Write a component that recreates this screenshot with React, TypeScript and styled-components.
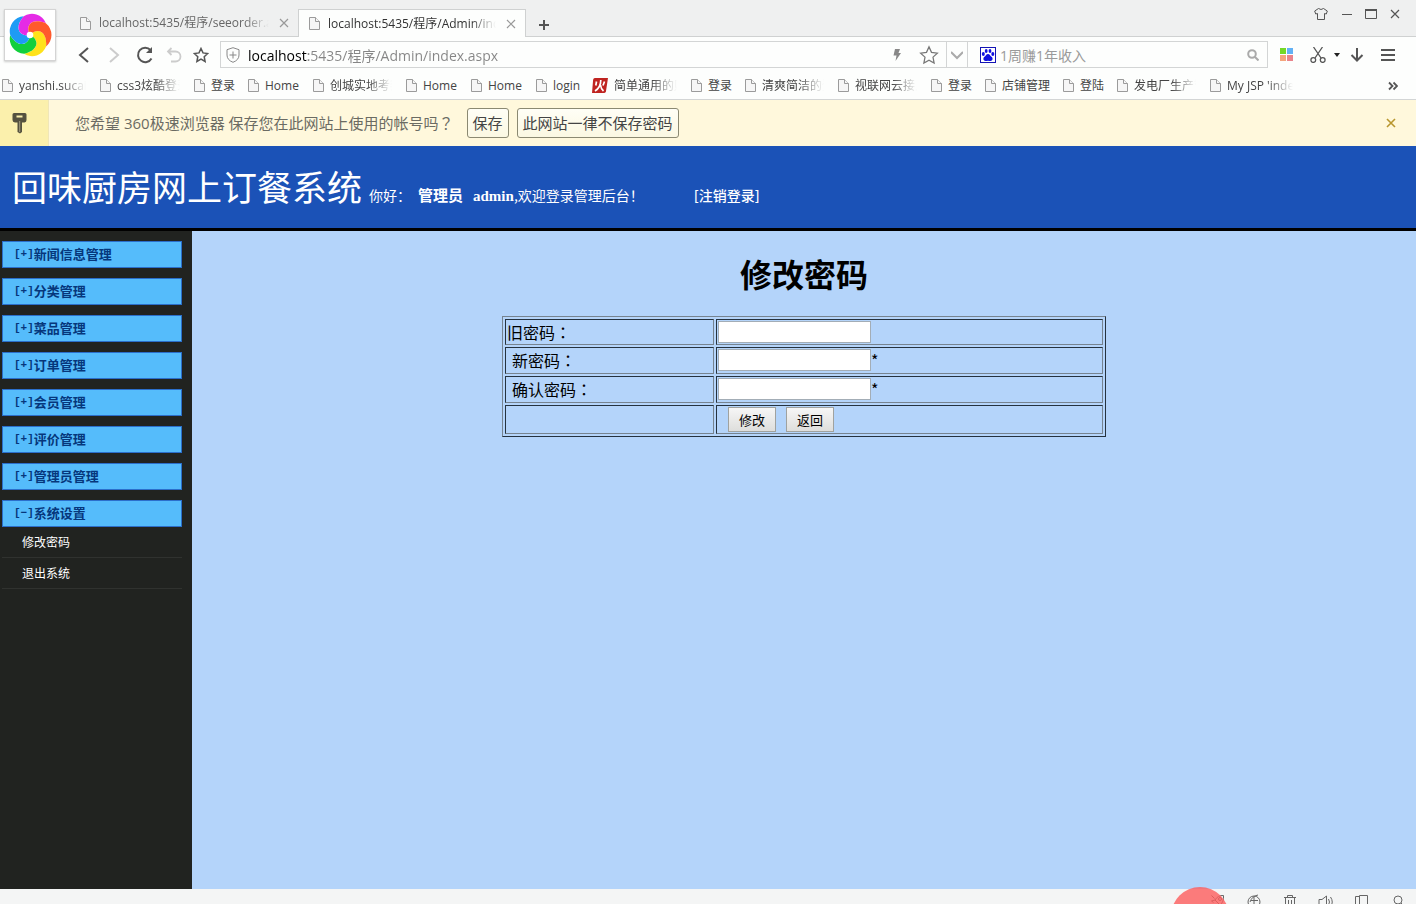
import React from 'react';
import styled, { createGlobalStyle, css } from 'styled-components';

const GlobalStyle = createGlobalStyle`
  *, *::before, *::after { box-sizing: border-box; }
  html, body { margin: 0; padding: 0; }
  body {
    font-family: "Open Sans", "Noto Sans CJK SC", sans-serif;
    font-size: 12px;
    color: #444;
  }
  button, input { font-family: inherit; margin: 0; }
`;

const Page = styled.div`
  display: flex;
  flex-direction: column;
  min-height: 100vh;
  overflow-x: hidden;
  position: relative;
`;

/* Full-width punctuation centred in its square. */
const CenteredMark = styled.span`
  font-family: "Noto Sans CJK TC", sans-serif;
`;

/* ---------- browser frame ---------- */

const IconButton = styled.button<{ $w?: number; $color?: string }>`
  display: flex;
  align-items: center;
  justify-content: center;
  flex: none;
  width: ${p => p.$w ?? 24}px;
  height: 24px;
  padding: 0;
  border: 0;
  background: none;
  color: ${p => p.$color ?? '#555'};
`;

const LogoTile = styled.div`
  position: absolute;
  left: 4px;
  top: 9px;
  z-index: 2;
  display: flex;
  align-items: center;
  justify-content: center;
  width: 52px;
  height: 52px;
  background: #fff;
  border: 1px solid #d4d4d4;
  box-shadow: 0 1px 2px rgba(0, 0, 0, 0.2);
`;

const TabStrip = styled.div`
  display: flex;
  align-items: flex-end;
  height: 37px;
  padding-left: 70px;
  background: #eff0f0;
  box-shadow: inset 0 -1px 0 #cfd1d1;
`;

const Tab = styled.div<{ $active?: boolean }>`
  display: flex;
  align-items: center;
  width: 228px;
  height: 28px;
  padding: 0 6px 0 10px;
  color: #666;
  ${p =>
    p.$active &&
    css`
      background: #fdfefd;
      border: 1px solid #cfd1d1;
      border-bottom: 0;
      color: #333;
    `}
`;

const fade = css`
  overflow: hidden;
  white-space: nowrap;
  mask-image: linear-gradient(to right, #000 calc(100% - 28px), transparent calc(100% - 3px));
`;

const TabTitle = styled.span`
  flex: 1;
  min-width: 0;
  margin: 0 3px 0 8px;
  font-size: 12px;
  line-height: 20px;
  ${fade}
`;

const WindowControls = styled.div`
  display: flex;
  align-self: flex-start;
  margin: 2px 9px 0 auto;
`;

const Toolbar = styled.div`
  display: flex;
  align-items: center;
  height: 35px;
  padding: 0 15px 0 69px;
  background: #fdfefd;
`;

const NavButtons = styled.div`
  display: flex;
  margin-right: 5px;
`;

const Omnibox = styled.div`
  display: flex;
  align-items: center;
  flex: 1;
  min-width: 0;
  height: 27px;
  border: 1px solid #d3d5d5;
  background: #fdfefd;
`;

const AddressInput = styled.input`
  flex: 1;
  min-width: 0;
  height: 24px;
  margin-left: 4px;
  padding: 0;
  border: 0;
  outline: 0;
  font-size: 14px;
  color: transparent;
  background: linear-gradient(to right, #000 60px, #858585 60px);
  background-clip: text;
`;

const DropButton = styled(IconButton)`
  width: 22px;
  height: 25px;
  border: solid #d3d5d5;
  border-width: 0 1px;
`;

const SearchBox = styled.div`
  display: flex;
  align-items: center;
  gap: 4px;
  width: 299px;
  padding: 0 2px 0 12px;
`;

const SearchInput = styled.input`
  flex: 1;
  min-width: 0;
  height: 24px;
  padding: 0;
  border: 0;
  outline: 0;
  background: transparent;
  font-size: 14px;
  color: #9a9a9a;
`;

const ToolButtons = styled.div`
  display: flex;
  align-items: center;
  margin-left: 3px;
`;

const BookmarkBar = styled.nav`
  display: flex;
  align-items: center;
  height: 28px;
  padding-left: 2px;
  background: #fdfefd;
  border-bottom: 1px solid #d3d5d5;
`;

const Bookmark = styled.a`
  display: flex;
  align-items: center;
  gap: 6px;
  flex: none;
  margin-right: 11px;
  color: #444;
  text-decoration: none;
`;

const BookmarkTitle = styled.span<{ $w: number; $fade?: boolean }>`
  width: ${p => p.$w}px;
  line-height: 18px;
  white-space: nowrap;
  ${p => p.$fade && fade}
`;

const MoreButton = styled(IconButton)`
  margin: 0 11px 0 auto;
`;

/* ---------- save password bar ---------- */

const InfoBar = styled.div`
  display: flex;
  align-items: center;
  height: 46px;
  background: #fff8dc;
  font-size: 15px;
  color: #6b6b63;
`;

const KeyCell = styled.div`
  align-self: stretch;
  width: 49px;
  padding: 13px 0 0 12px;
  background: #fbf0ac;
  border-right: 1px solid #efe6b8;
`;

const InfoText = styled.span`
  margin: 0 13px 0 26px;
  line-height: 22px;
`;

const InfoButton = styled.button`
  height: 30px;
  margin-right: 8px;
  padding: 0 5px;
  border: 1px solid #8b8972;
  border-radius: 3px;
  background: linear-gradient(#fffef6, #fbf8e2);
  font-size: 15px;
  line-height: 22px;
  color: #444;
`;

const InfoClose = styled(IconButton)`
  margin: 0 13px 0 auto;
`;

/* ---------- admin site ---------- */

const SiteHeader = styled.header`
  display: flex;
  align-items: baseline;
  height: 85px;
  padding: 14px 12px 0;
  background: #1b52b7;
  border-bottom: 3px solid #000;
  color: #fff;
  font-family: "Noto Sans CJK SC", sans-serif;
  font-size: 14px;
`;

const SiteTitle = styled.span`
  margin-right: 7px;
  font-size: 35px;
  line-height: 52px;
`;

const Greeting = styled.span`
  display: flex;
  align-items: baseline;
`;

const RoleName = styled.b`
  margin: 0 10px 0 7px;
  font-size: 15px;
  font-weight: 700;
`;

const UserName = styled.b`
  font-family: "Liberation Serif", serif;
  font-size: 15px;
  font-weight: 700;
`;

const LogoutLink = styled.a`
  margin-left: 50px;
  color: #fff;
  font-weight: 500;
  text-decoration: none;
`;

const SiteBody = styled.div`
  display: flex;
  flex: 1;
`;

const Sidebar = styled.nav`
  flex: none;
  width: 192px;
  padding: 10px 10px 0 2px;
  background: #212320;
  font-family: "Noto Sans CJK SC", sans-serif;
`;

const MenuGroup = styled.button`
  display: flex;
  align-items: center;
  width: 100%;
  height: 27px;
  margin-top: 10px;
  padding: 0 11px 2px;
  border: 1px solid #2b6fcb;
  background: #55bcfb;
  color: #06377c;
  font-size: 13px;
  font-weight: 700;
  line-height: 18px;

  &:first-child {
    margin-top: 0;
  }
`;

const Sign = styled.span`
  font-family: "Liberation Mono", monospace;
  font-size: 11px;
`;

const MenuItem = styled.a`
  display: block;
  height: 31px;
  padding-left: 20px;
  border-bottom: 1px solid #30322f;
  color: #fff;
  font-size: 12px;
  line-height: 30px;
  text-decoration: none;
`;

const Content = styled.main`
  display: flex;
  flex-direction: column;
  align-items: center;
  flex: 1;
  padding-top: 18px;
  background: #b4d4fa;
  color: #000;
  font-family: "Noto Sans CJK SC", sans-serif;
`;

const Heading = styled.h1`
  margin: 0 0 19px;
  font-size: 32px;
  line-height: 48px;
`;

const FormTable = styled.table`
  width: 604px;
  border: 1px solid;
  border-color: #76838f #25323e #25323e #76838f;
  border-spacing: 2px;
  font-size: 16px;
`;

const Cell = styled.td<{ $w?: number }>`
  width: ${p => (p.$w ? `${p.$w}px` : 'auto')};
  height: 27px;
  padding: 1px;
  border: 1px solid;
  border-color: #25323e #76838f #76838f #25323e;
  vertical-align: top;

  tr:first-child > & {
    height: 26px;
  }
`;

const FieldLabel = styled.label<{ $indent?: boolean }>`
  display: block;
  padding-left: ${p => (p.$indent ? 5 : 0)}px;
  line-height: 22px;
`;

const Field = styled.div`
  display: flex;
  line-height: 22px;
`;

const PasswordInput = styled.input`
  width: 153px;
  height: 22px;
  padding: 1px 2px;
  border: 1px solid #a3adb6;
  background: #fff;
  font-size: 13px;
`;

const FormActions = styled.div`
  display: flex;
  gap: 10px;
  padding-left: 10px;
`;

const FormButton = styled.button`
  width: 48px;
  height: 25px;
  padding: 0;
  border: 1px solid #a0a29f;
  background: linear-gradient(#f6f6f6, #dededc);
  color: #000;
  font-size: 13px;
  line-height: 20px;
`;

/* ---------- status bar ---------- */

const StatusBar = styled.footer`
  position: relative;
  display: flex;
  justify-content: flex-end;
  gap: 20px;
  height: 15px;
  padding: 5px 10px 0;
  background: #f4f5f5;
`;

const StatusButton = styled.button`
  width: 16px;
  height: 10px;
  padding: 0;
  border: 0;
  overflow: hidden;
  background: none;
  color: #666;
`;

const Bubble = styled.svg`
  position: absolute;
  right: 187px;
  bottom: 0;
`;

/* ---------- drawings ---------- */

type StrokeProps = { size?: number; w?: number; children: React.ReactNode };

const Drawing = styled.svg`
  display: block;
  flex: none;
`;

const Stroke = ({ size = 16, w = 1, children }: StrokeProps) => (
  <Drawing
    width={size}
    height={size}
    viewBox={`0 0 ${size} ${size}`}
    fill="none"
    stroke="currentColor"
    strokeWidth={w}
  >
    {children}
  </Drawing>
);

const FileIcon = () => (
  <Drawing width="11" height="13" viewBox="0 0 11 13" fill="#f6f6f6" stroke="#9b9b9b">
    <path d="M.5.5h6l4 4v8H.5z" />
    <path d="M6.500 .5v4h4" />
  </Drawing>
);

const FireIcon = () => (
  <Drawing width="16" height="15" viewBox="0 0 16 15">
    <path d="M3 0h13l-2 13q0 2-3 2H0L1 3q0-3 2-3z" fill="#bf2420" />
    <path d="M4.500 3.500l-.7 4M8.800 2q0 7.500-5.800 11M8.500 7q.5 4 3 6M12.500 3.500l-1.500 4" fill="none" stroke="#fff" strokeWidth="1.700" />
  </Drawing>
);

const petals = [
  ['#ffe21a', 0],
  ['#12cf3c', 72],
  ['#1e9bf5', 144],
  ['#e52be6', 216],
  ['#ff5a2c', 288],
] as const;

const BrowserLogo = () => (
  <svg width="44" height="44" viewBox="-22 -22 44 44">
    {petals.map(([color, angle]) => (
      <path
        key={color}
        d="M0 0C6-8 17-6 17 10A15 15 0 0 1-4.300 19.300C11 14.300 9.500 3.200 0 0z"
        fill={color}
        transform={`rotate(${angle + 5})`}
      />
    ))}
    <circle r="3.300" fill="#fff" />
  </svg>
);

const PawIcon = () => (
  <Drawing width="16" height="16" viewBox="0 0 16 16">
    <rect x=".5" y=".5" width="15" height="15" fill="#fff" stroke="#1414b4" />
    <g fill="#1010e0">
      <ellipse cx="3.300" cy="7" rx="1.500" ry="1.900" />
      <ellipse cx="6.200" cy="4" rx="1.400" ry="1.900" />
      <ellipse cx="10" cy="4" rx="1.400" ry="1.900" />
      <ellipse cx="12.800" cy="7" rx="1.500" ry="1.900" />
      <path d="M8 7c1.700 0 2.200 1.800 3.500 2.800 2 1.500 1 4.200-1 4.200-1 0-1.500-.3-2.500-.3s-1.500.3-2.500.3c-2 0-3-2.700-1-4.200C5.800 8.800 6.300 7 8 7z" />
    </g>
  </Drawing>
);

const CloseMark = ({ w = 1.2 }: { w?: number }) => (
  <Stroke size={10} w={w}>
    <path d="M1 1l8 8M9 1l-8 8" />
  </Stroke>
);

const KeyIcon = () => (
  <svg width="15" height="21" viewBox="0 0 15 21">
    <path d="M2 0h11q1.500 0 1.500 1.500V7q0 2-2 2.500H10V19l-2 1.500L5.500 19V9.500H3Q.5 9 .5 7V1.500Q.5 0 2 0z" fill="#55523f" />
    <path d="M4.500 2.500h6v2h-6z" fill="#fbf0ac" />
    <path d="M7.700 8v11" stroke="#a29d80" />
  </svg>
);

type Mark = { title: string; w: number; fade?: boolean; fire?: boolean };
const bookmarks: Mark[] = [
  { title: 'yanshi.sucai', w: 70, fade: true },
  { title: 'css3炫酷登录', w: 66, fade: true },
  { title: '登录', w: 26 },
  { title: 'Home', w: 37 },
  { title: '创城实地考察', w: 65, fade: true },
  { title: 'Home', w: 37 },
  { title: 'Home', w: 37 },
  { title: 'login', w: 28 },
  { title: '简单通用的账', w: 66, fade: true, fire: true },
  { title: '登录', w: 26 },
  { title: '清爽简洁的登', w: 65, fade: true },
  { title: '视联网云接入', w: 65, fade: true },
  { title: '登录', w: 26 },
  { title: '店铺管理', w: 50 },
  { title: '登陆', w: 26 },
  { title: '发电厂生产管', w: 65, fade: true },
  { title: "My JSP 'index'", w: 69, fade: true },
];

const groups = ['新闻信息管理', '分类管理', '菜品管理', '订单管理', '会员管理', '评价管理', '管理员管理'];

const STAR = 'M8 1.500l2 4.400 4.700.6-3.500 3.200.9 4.800L8 12.200l-4.100 2.300.9-4.800L1.300 6.500 6 5.900z';

export default function App() {
  return (
    <Page>
      <GlobalStyle />
      <LogoTile>
        <BrowserLogo />
      </LogoTile>

      <TabStrip>
        <Tab>
          <FileIcon />
          <TabTitle>localhost:5435/程序/seeorder.aspx</TabTitle>
          <IconButton $w={17} $color="#999" aria-label="关闭标签"><CloseMark /></IconButton>
        </Tab>
        <Tab $active>
          <FileIcon />
          <TabTitle>localhost:5435/程序/Admin/index.aspx</TabTitle>
          <IconButton $w={17} $color="#999" aria-label="关闭标签"><CloseMark /></IconButton>
        </Tab>
        <IconButton $w={36} aria-label="新标签">
          <Stroke size={10} w={2}><path d="M5 0v10M0 5h10" /></Stroke>
        </IconButton>
        <WindowControls>
          <IconButton $w={28} aria-label="皮肤">
            <Stroke size={14}><path d="M4.500 1.500Q7 3.500 9.500 1.500L13.300 4l-1 3-1.800-.5v6h-7v-6L1.700 7l-1-3z" /></Stroke>
          </IconButton>
          <IconButton aria-label="最小化">
            <Stroke size={10}><path d="M0 5.500h10" /></Stroke>
          </IconButton>
          <IconButton aria-label="最大化">
            <Stroke size={12}><path d="M.5 1.500h11v9H.5z" /><path d="M0 2h12" strokeWidth="2" /></Stroke>
          </IconButton>
          <IconButton aria-label="关闭"><CloseMark /></IconButton>
        </WindowControls>
      </TabStrip>

      <Toolbar>
        <NavButtons>
          <IconButton $w={30} aria-label="后退">
            <Stroke w={2}><path d="M12 1L4 8l8 7" /></Stroke>
          </IconButton>
          <IconButton $w={29} $color="#ccc" aria-label="前进">
            <Stroke w={2}><path d="M4 1l8 7-8 7" /></Stroke>
          </IconButton>
          <IconButton $w={33} aria-label="刷新">
            <Stroke size={18} w={2}><path d="M15.500 12.500A7.200 7.200 0 1 1 14.500 4" /><path d="M16 1v6h-6z" fill="currentColor" stroke="none" /></Stroke>
          </IconButton>
          <IconButton $w={26} $color="#ccc" aria-label="恢复">
            <Stroke w={1.800}><path d="M5.500 1L2 4.500 5.500 8M2 4.500h7.500a5 5 0 0 1 0 10H5" /></Stroke>
          </IconButton>
          <IconButton $w={28} aria-label="收藏">
            <Stroke w={1.500}><path d={STAR} /></Stroke>
          </IconButton>
        </NavButtons>

        <Omnibox>
          <IconButton $w={23} $color="#888" aria-label="网站信息">
            <Stroke><path d="M8 .7l6 2V8q0 5-6 7.300Q2 13 2 8V2.700zM8 4.500v7M4.500 8h7" /></Stroke>
          </IconButton>
          <AddressInput aria-label="地址" defaultValue="localhost:5435/程序/Admin/index.aspx" />
          <IconButton $w={31} $color="#888" aria-label="极速模式">
            <svg width="8" height="12" viewBox="0 0 8 12"><path d="M2 0h5L5.500 4H8L2.500 12l1-5.500H.5z" fill="currentColor" /></svg>
          </IconButton>
          <IconButton $w={34} $color="#777" aria-label="加入收藏">
            <svg width="20" height="20" viewBox="0 0 16 16" fill="none" stroke="currentColor" strokeWidth="1"><path d={STAR} /></svg>
          </IconButton>
          <DropButton $color="#aaa" aria-label="地址列表">
            <Stroke size={12} w={2}><path d="M0 3l6 6 6-6" /></Stroke>
          </DropButton>
          <SearchBox>
            <PawIcon />
            <SearchInput aria-label="搜索" defaultValue="1周赚1年收入" />
            <IconButton $color="#aaa" aria-label="搜索">
              <Stroke size={12} w={2}><circle cx="5" cy="5" r="3.800" /><path d="M8 8l3.500 3.500" /></Stroke>
            </IconButton>
          </SearchBox>
        </Omnibox>

        <ToolButtons>
          <IconButton $w={31} aria-label="应用">
            <svg width="13" height="13" viewBox="0 0 13 13">
              <path d="M0 0h6v6H0z" fill="#74d827" />
              <path d="M7 0h6v6H7z" fill="#62b1f5" />
              <path d="M0 7h6v6H0z" fill="#f5a57c" />
              <path d="M7 7h6v6H7z" fill="#e9838b" />
            </svg>
          </IconButton>
          <IconButton $w={32} aria-label="截图">
            <Stroke w={1.300}><path d="M3.500 0l7.500 11M12.500 0L5 11" /><circle cx="3.300" cy="13" r="2.400" /><circle cx="12.700" cy="13" r="2.400" /></Stroke>
          </IconButton>
          <IconButton $w={6} $color="#222" aria-label="截图选项">
            <svg width="6" height="4" viewBox="0 0 6 4"><path d="M0 0h6L3 4z" fill="currentColor" /></svg>
          </IconButton>
          <IconButton $w={34} aria-label="下载">
            <Stroke size={14} w={2}><path d="M7 0v12M1.500 7L7 12.500 12.500 7" /></Stroke>
          </IconButton>
          <IconButton $w={27} aria-label="菜单">
            <Stroke size={14} w={2}><path d="M0 2h14M0 7h14M0 12h14" /></Stroke>
          </IconButton>
        </ToolButtons>
      </Toolbar>

      <BookmarkBar>
        {bookmarks.map((b, i) => (
          <Bookmark key={i} href="#">
            {b.fire ? <FireIcon /> : <FileIcon />}
            <BookmarkTitle $w={b.w} $fade={b.fade}>{b.title}</BookmarkTitle>
          </Bookmark>
        ))}
        <MoreButton aria-label="更多书签">
          <Stroke size={10} w={1.800}><path d="M1 1.500L4.500 5 1 8.500M5.500 1.500L9 5 5.500 8.500" /></Stroke>
        </MoreButton>
      </BookmarkBar>

      <InfoBar>
        <KeyCell><KeyIcon /></KeyCell>
        <InfoText>您希望 360极速浏览器 保存您在此网站上使用的帐号吗<CenteredMark>？</CenteredMark></InfoText>
        <InfoButton>保存</InfoButton>
        <InfoButton>此网站一律不保存密码</InfoButton>
        <InfoClose $color="#b8962e" aria-label="关闭提示"><CloseMark w={1.600} /></InfoClose>
      </InfoBar>

      <SiteHeader>
        <SiteTitle>回味厨房网上订餐系统</SiteTitle>
        <Greeting>
          你好：<RoleName>管理员</RoleName>
          <UserName>admin</UserName>,欢迎登录管理后台！
        </Greeting>
        <LogoutLink href="#">[注销登录]</LogoutLink>
      </SiteHeader>

      <SiteBody>
        <Sidebar>
          {groups.map(name => (
            <MenuGroup key={name}><Sign>[+]</Sign>{name}</MenuGroup>
          ))}
          <MenuGroup><Sign>[−]</Sign>系统设置</MenuGroup>
          <MenuItem href="#">修改密码</MenuItem>
          <MenuItem href="#">退出系统</MenuItem>
        </Sidebar>

        <Content>
          <Heading>修改密码</Heading>
          <FormTable>
            <tbody>
              <tr>
                <Cell $w={209}><FieldLabel htmlFor="old">旧密码<CenteredMark>：</CenteredMark></FieldLabel></Cell>
                <Cell><Field><PasswordInput id="old" type="password" /></Field></Cell>
              </tr>
              <tr>
                <Cell><FieldLabel $indent htmlFor="new">新密码<CenteredMark>：</CenteredMark></FieldLabel></Cell>
                <Cell><Field><PasswordInput id="new" type="password" />*</Field></Cell>
              </tr>
              <tr>
                <Cell><FieldLabel $indent htmlFor="confirm">确认密码<CenteredMark>：</CenteredMark></FieldLabel></Cell>
                <Cell><Field><PasswordInput id="confirm" type="password" />*</Field></Cell>
              </tr>
              <tr>
                <Cell />
                <Cell>
                  <FormActions>
                    <FormButton>修改</FormButton>
                    <FormButton>返回</FormButton>
                  </FormActions>
                </Cell>
              </tr>
            </tbody>
          </FormTable>
        </Content>
      </SiteBody>

      <StatusBar>
        <StatusButton aria-label="加速">
          <Stroke><path d="M13.500 1.500Q8 1 5 6l5 5q4-3 3.500-9.500zM5 6L1.500 7l2 1.500M1.500 1.500l3 3" /><circle cx="10" cy="5" r="1.500" /></Stroke>
        </StatusButton>
        <StatusButton aria-label="缩放">
          <Stroke><circle cx="8" cy="8" r="6" /><path d="M4 8Q6 2 12 1M8 3v8M5 6.500h7" /></Stroke>
        </StatusButton>
        <StatusButton aria-label="清理">
          <Stroke><path d="M2 3.500h12M5.500 3V1.500h5V3M3.500 4v10h9V4M6.500 6v7M9.500 6v7" /></Stroke>
        </StatusButton>
        <StatusButton aria-label="声音">
          <Stroke><path d="M1 5.500h3L8.500 2v12L4 10.500H1zM10.500 5q2 3 0 6M12.500 3q3.500 5 0 10" /></Stroke>
        </StatusButton>
        <StatusButton aria-label="窗口">
          <Stroke><path d="M5.500 1.500h8v12h-8zM5 2.500H1.500v9" /></Stroke>
        </StatusButton>
        <StatusButton aria-label="查找">
          <Stroke><circle cx="8" cy="6" r="4" /><path d="M11 9l4 4" /></Stroke>
        </StatusButton>
        <Bubble width="58" height="17" viewBox="0 0 58 17">
          <circle cx="29" cy="29" r="29" fill="#fd5c5c" fillOpacity="0.8" />
        </Bubble>
      </StatusBar>
    </Page>
  );
}
